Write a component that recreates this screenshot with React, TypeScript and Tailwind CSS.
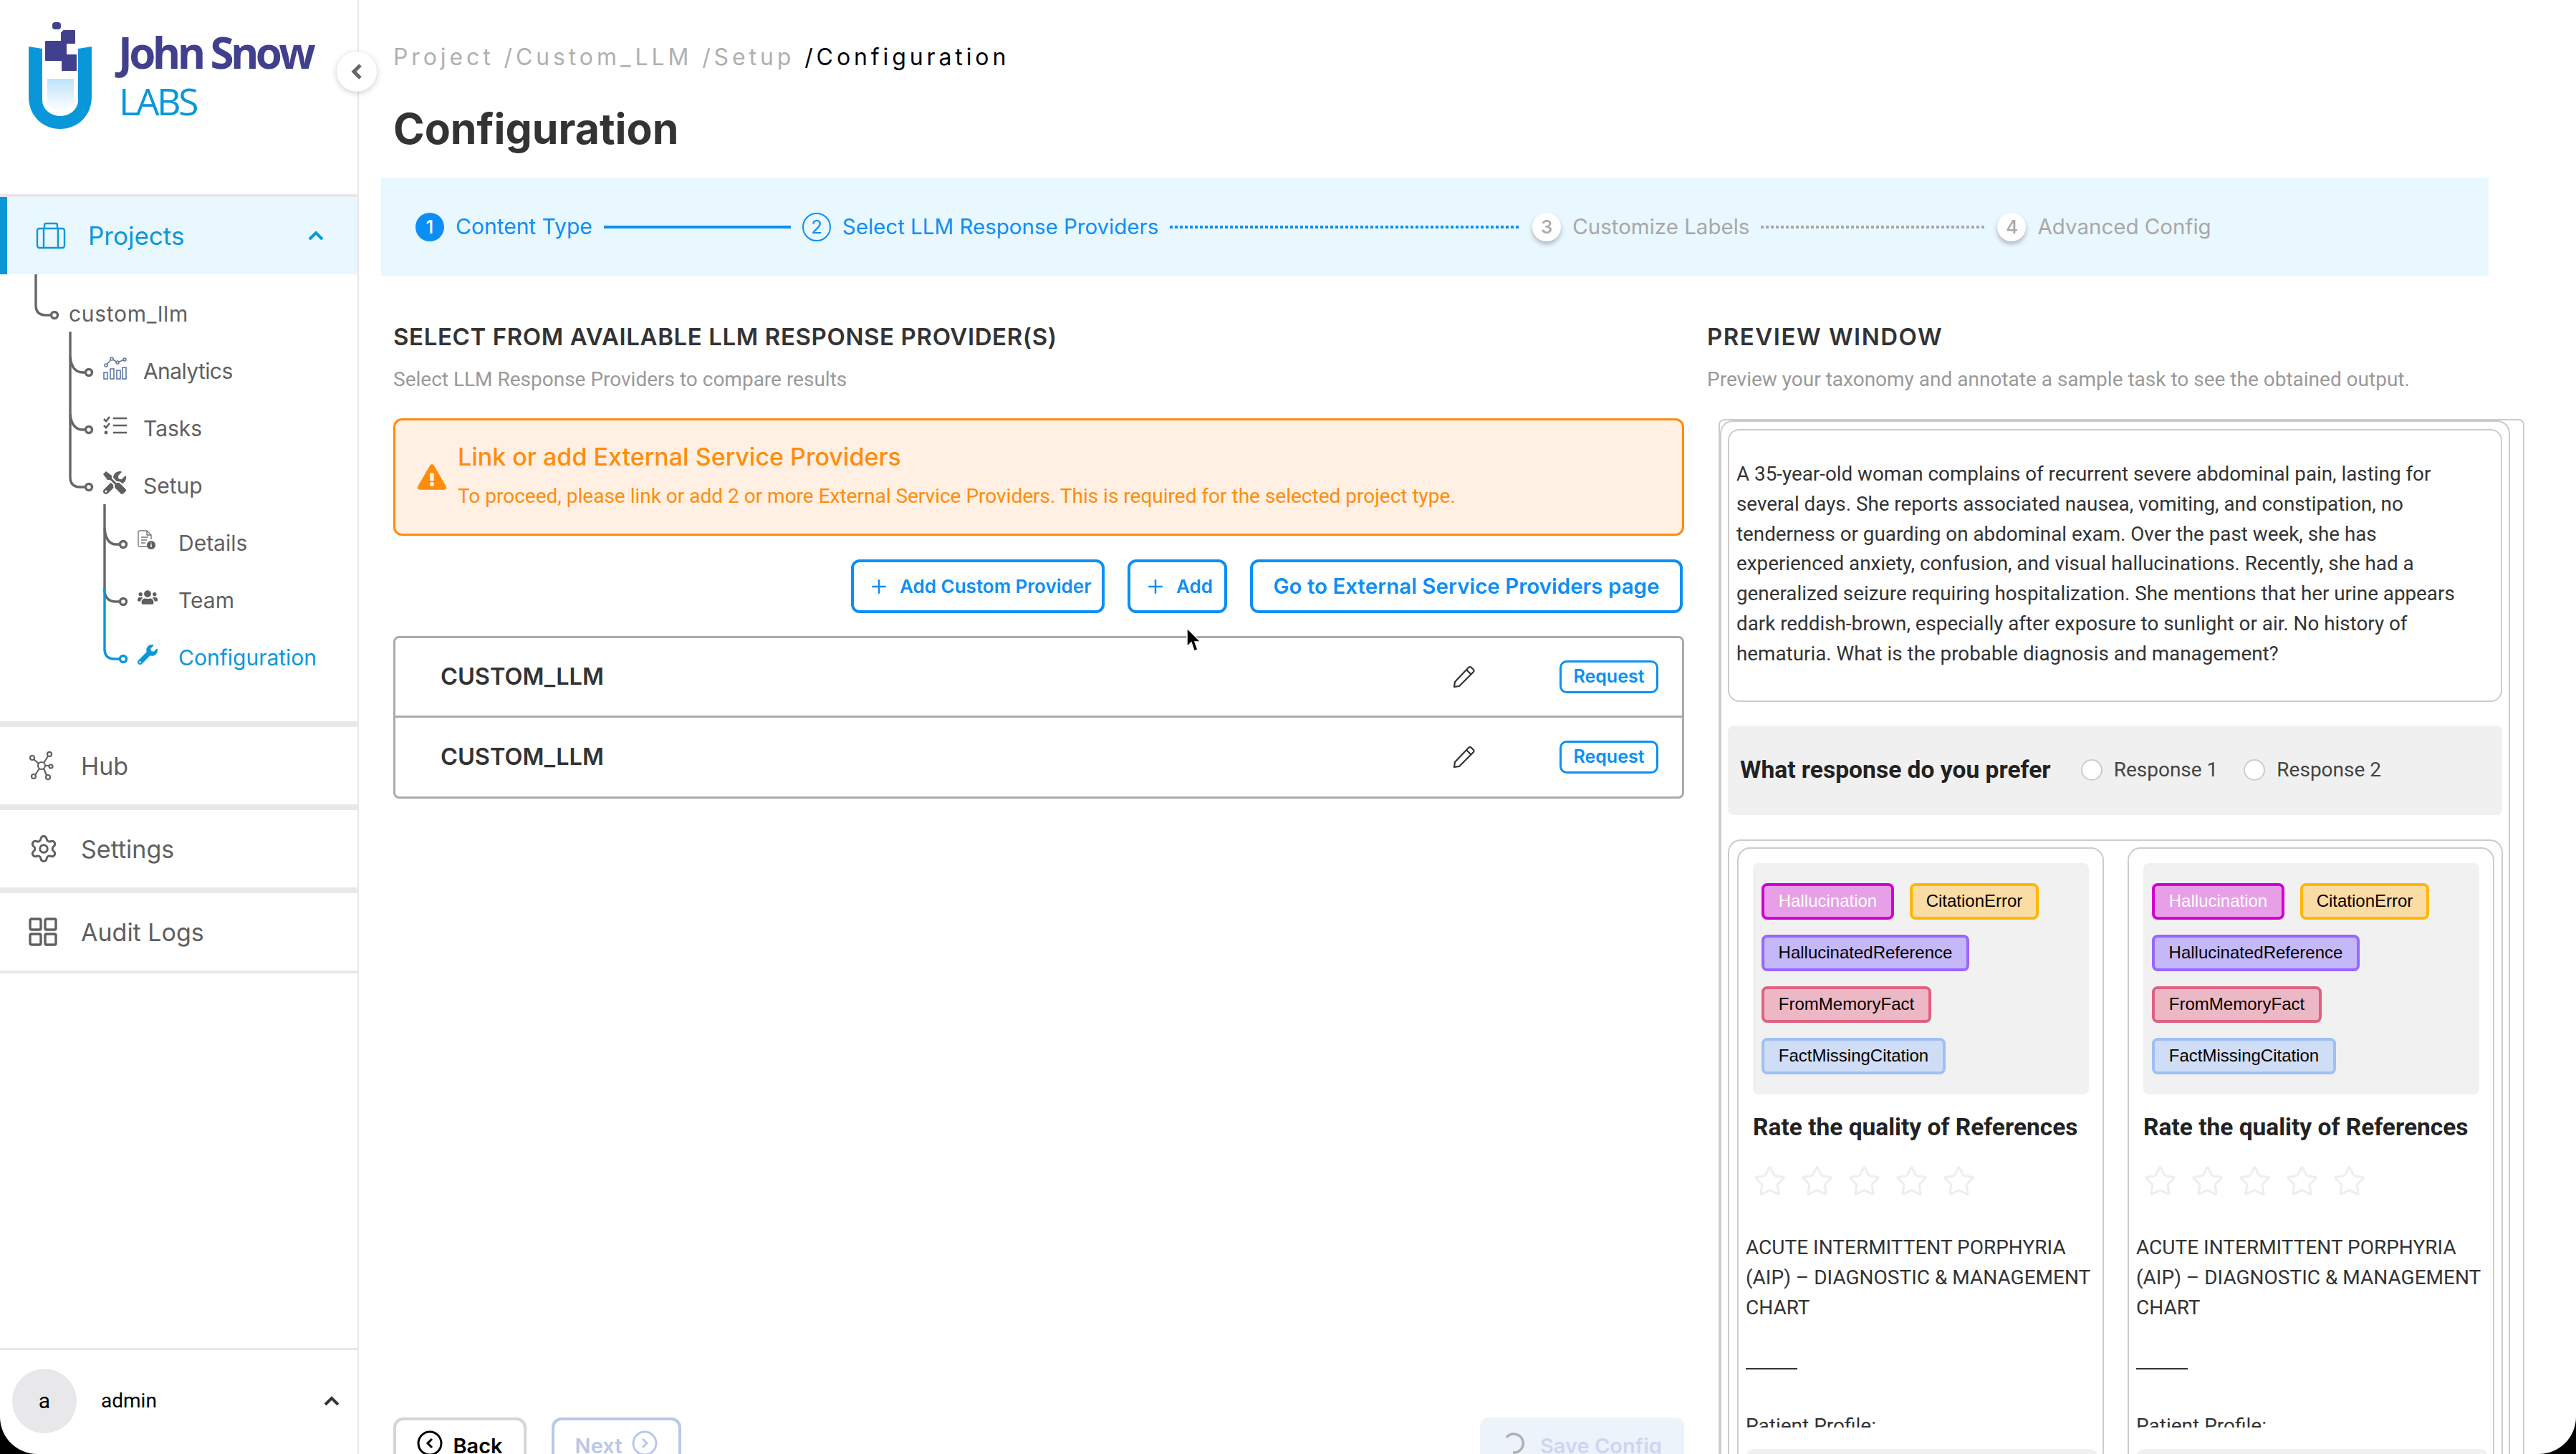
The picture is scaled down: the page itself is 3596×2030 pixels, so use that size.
import { Plus, Settings, Star } from "lucide-react";
import { FaExclamationTriangle, FaTools, FaUsers, FaWrench } from "react-icons/fa";

const Logo = () => (
  <svg width="100" height="160" viewBox="0 0 100 160" className="shrink-0">
    <defs>
      <linearGradient id="liquid" x1="0" y1="0" x2="0" y2="1">
        <stop offset="0" stopColor="#bde3fa" />
        <stop offset="1" stopColor="#ffffff" />
      </linearGradient>
    </defs>
    {/* viewBox origin sits at 40,25 on the page */}
    <path d="M0 40 L19 43 V115 C19 128 32 137 44 137 C57 137 69 128 69 115 V43 L88 40 V110 C88 137 68 155 44 155 C20 155 0 137 0 110 Z" fill="#0a97da" />
    <path d="M26 85 H63 V115 C63 124 54 131 44 131 C34 131 26 124 26 115 Z" fill="url(#liquid)" />
    <rect x="33" y="6" width="12" height="10" rx="4" fill="#41408f" />
    <path d="M49 18 H64 V35 H52 V52 H66 V73 H47 V59 H24 V33 H46 V21 Z" fill="#41408f" strokeLinejoin="round" stroke="#41408f" strokeWidth="2" />
  </svg>
);

const Chevron = ({ up, className }: { up?: boolean; className?: string }) => (
  <svg width="24" height="16" viewBox="0 0 24 16" className={className}>
    <path d={up ? "M3 13 L12 4 L21 13" : "M3 3 L12 12 L21 3"} fill="none" stroke="currentColor" strokeWidth="4" />
  </svg>
);

const Briefcase = () => (
  <svg width="42" height="38" viewBox="0 0 42 38" fill="none" stroke="#0a97da" strokeWidth="2.4">
    <rect x="2" y="9" width="38" height="27" rx="3" />
    <path d="M11 36 V9 M31 36 V9 M12 9 V4 Q12 2 14 2 H28 Q30 2 30 4 V9" />
  </svg>
);

const AnalyticsIcon = () => (
  <svg width="34" height="32" viewBox="0 0 34 32" fill="none" stroke="#5b78a8" strokeWidth="1.6">
    <path d="M4 12 L12 3 L20 8 L30 4" stroke="#777" />
    <circle cx="4" cy="12" r="2" fill="#fff" />
    <circle cx="12" cy="3" r="2" fill="#fff" />
    <circle cx="20" cy="8" r="2" fill="#fff" />
    <circle cx="30" cy="4" r="2" fill="#fff" />
    <rect x="1" y="22" width="5" height="9" />
    <rect x="10" y="17" width="5" height="14" />
    <rect x="19" y="19" width="5" height="12" />
    <rect x="27" y="15" width="5" height="16" />
  </svg>
);

const TasksIcon = () => (
  <svg width="34" height="28" viewBox="0 0 34 28" fill="none" stroke="#5f5f5f" strokeWidth="2.6">
    <path d="M1 5 L4 8 L9 2 M1 14 L4 17 L9 11 M14 4 H33 M14 14 H33 M14 24 H33" />
    <circle cx="4" cy="24" r="2.4" fill="#5f5f5f" stroke="none" />
  </svg>
);

const DetailsIcon = () => (
  <svg width="26" height="28" viewBox="0 0 26 28" fill="none" stroke="#777" strokeWidth="1.4">
    <path d="M14 23 H3 Q1 23 1 21 V3 Q1 1 3 1 H13 L19 7 V13 M13 1 V7 H19 M5 10 H15 M5 14 H13 M5 18 H11" />
    <circle cx="19" cy="21" r="6" fill="#5f5f5f" stroke="none" />
    <path d="M19 20 V24 M19 17.5 V18.5" stroke="#fff" strokeWidth="1.6" />
  </svg>
);

const HubIcon = () => (
  <svg width="36" height="40" viewBox="0 0 36 40" fill="none" stroke="#5f5f5f" strokeWidth="2.2">
    <circle cx="18" cy="20" r="5" />
    <circle cx="5" cy="9" r="3" />
    <circle cx="29" cy="4" r="3" />
    <circle cx="31" cy="21" r="2.5" />
    <circle cx="7" cy="35" r="3" />
    <circle cx="27" cy="36" r="3" />
    <path d="M7 11 L14 17 M27 7 L21 16 M22 20 H28 M9 33 L15 24 M25 33 L21 24" />
  </svg>
);

const GridIcon = () => (
  <svg width="40" height="40" viewBox="0 0 40 40" fill="none" stroke="#5f5f5f" strokeWidth="3.4">
    <rect x="2" y="2" width="15" height="15" rx="2" />
    <rect x="23" y="2" width="15" height="15" rx="2" />
    <rect x="2" y="23" width="15" height="15" rx="2" />
    <rect x="23" y="23" width="15" height="15" rx="2" />
  </svg>
);

const PencilIcon = () => (
  <svg width="34" height="34" viewBox="0 0 34 34" fill="none" stroke="#333" strokeWidth="2.2" strokeLinejoin="round">
    <path d="M3 31 L4 24 L23 4 Q25 2 27 4 L30 7 Q31 9 30 10 L10 30 Z M20 7 L27 14" />
  </svg>
);

// connector lines for the project tree, y is relative to the bottom of the Projects row
const TreeLines = () => (
  <svg width="200" height="560" className="absolute left-0 top-0" fill="none" stroke="#666" strokeWidth="3.4">
    <path d="M50 0 V43 Q50 57 64 57 H72" />
    <path d="M98 80 V283 Q98 297 112 297 H120" />
    <path d="M98 115 Q100 137 116 137 H120" />
    <path d="M98 195 Q100 217 116 217 H120" />
    <path d="M146 321 V443 Q148 457 162 457 H168" />
    <path d="M146 355 Q148 377 162 377 H168" />
    <path d="M146 437 V523 Q146 537 160 537 H168" stroke="#0a97da" />
    <circle cx="76" cy="57" r="4.5" fill="#fff" />
    <circle cx="124" cy="137" r="4.5" fill="#fff" />
    <circle cx="124" cy="217" r="4.5" fill="#fff" />
    <circle cx="124" cy="297" r="4.5" fill="#fff" />
    <circle cx="172" cy="377" r="4.5" fill="#fff" />
    <circle cx="172" cy="457" r="4.5" fill="#fff" />
    <circle cx="172" cy="537" r="4.5" fill="#fff" stroke="#0a97da" />
  </svg>
);

const TreeRow = ({ icon, label, level, active, className }: { icon?: React.ReactNode; label: string; level: number; active?: boolean; className?: string }) => (
  <div className={`flex h-[80px] items-center text-[30px] ${active ? "text-[#0a97da]" : "text-[#5f5f5f]"} ${level === 0 ? "pl-[96px]" : level === 1 ? "pl-[144px]" : "pl-[192px]"}`}>
    {icon && <span className={`flex h-10 -translate-y-1 items-center ${level === 1 ? "w-[56px]" : "w-[57px]"}`}>{icon}</span>}
    <span className={className}>{label}</span>
  </div>
);

const NavRow = ({ icon, label }: { icon: React.ReactNode; label: string }) => (
  <div className="box-content flex h-[108px] items-center border-t-8 border-[#e8e8ea] pl-[40px] text-[34px] text-[#5f5f5f]">
    <span className="flex w-[73px] items-center">{icon}</span>
    {label}
  </div>
);

const StepCircle = ({ n, state }: { n: number; state: "done" | "current" | "todo" }) => (
  <span
    className={`flex h-10 w-10 shrink-0 items-center justify-center rounded-full text-[26px] ${
      state === "done"
        ? "bg-[#0b8ff5] font-medium text-white"
        : state === "current"
          ? "border-2 border-[#0b8ff5] text-[#0b8ff5]"
          : "bg-white font-medium text-[#a8a8a8] shadow-[0_4px_6px_rgba(0,0,0,0.25)]"
    }`}
  >
    {n}
  </span>
);

const Stepper = () => (
  <div className="-ml-[17px] flex h-[137px] w-[2942px] items-center bg-[#e9f7fe] pl-[48px] text-[30px]">
    <StepCircle n={1} state="done" />
    <span className="ml-4 text-[#0b8ff5]">Content Type</span>
    <span className="ml-4 h-1 w-[261px] bg-[#0b8ff5]" />
    <span className="w-4" />
    <StepCircle n={2} state="current" />
    <span className="ml-4 text-[29.5px] text-[#0b8ff5]">Select LLM Response Providers</span>
    <span className="ml-4 h-1 w-[490px] bg-[repeating-linear-gradient(90deg,#0b8ff5_0_4px,transparent_4px_7px)]" />
    <span className="w-4" />
    <StepCircle n={3} state="todo" />
    <span className="ml-4 text-[29.5px] text-[#a8a8a8]">Customize Labels</span>
    <span className="ml-4 h-1 w-[314px] bg-[repeating-linear-gradient(90deg,#a8a8a8_0_4px,transparent_4px_7px)]" />
    <span className="w-4" />
    <StepCircle n={4} state="todo" />
    <span className="ml-4 text-[29.5px] text-[#a8a8a8]">Advanced Config</span>
  </div>
);

const OutlineButton = ({ children, className }: { children: React.ReactNode; className?: string }) => (
  <button className={`flex h-[75px] items-center rounded-[12px] border-4 border-[#0b8ff5] font-semibold text-[#0b8ff5] ${className ?? ""}`}>
    {children}
  </button>
);

const ProviderRow = ({ last }: { last?: boolean }) => (
  <div className={`flex items-center pl-[63px] pr-[33px] ${last ? "h-[110px]" : "h-[111px] border-b-[3px] border-[#aaaaaa]"}`}>
    <span className="flex-1 text-[32.5px] font-semibold text-[#333]">CUSTOM_LLM</span>
    <PencilIcon />
    <button className="ml-[116px] h-[46px] w-[138px] rounded-[10px] border-[3px] border-[#0b8ff5] text-[25px] font-semibold text-[#0b8ff5]">Request</button>
  </div>
);

const labels = [
  { text: "Hallucination", cls: "w-[185px] border-[#d000d0] bg-[#e7a0e7] text-white" },
  { text: "CitationError", cls: "w-[180px] border-[#ffb800] bg-[#fbdca5] text-black" },
  { text: "HallucinatedReference", cls: "w-[290px] border-[#9966ff] bg-[#c4b8f8] text-black" },
  { text: "FromMemoryFact", cls: "w-[237px] border-[#e06080] bg-[#ecb8c5] text-black" },
  { text: "FactMissingCitation", cls: "w-[257px] border-[#a0c0f5] bg-[#cfddf7] text-black" },
];

const ResponseCard = () => (
  <div className="h-[900px] w-[512px] rounded-[18px] border-2 border-[#cccccc] pt-[20px]">
    <div className="ml-[20px] flex h-[323px] w-[469px] flex-wrap content-start gap-x-[22px] gap-y-[21px] rounded-[8px] bg-[#f1f1f1] pl-[12px] pt-[28px] font-['Liberation_Sans',sans-serif]">
      {labels.map((l) => (
        <span key={l.text} className={`flex h-[51px] items-center justify-center rounded-[8px] border-4 text-[24px] ${l.cls}`}>
          {l.text}
        </span>
      ))}
    </div>
    <h3 className="ml-[20px] mt-[24px] text-[33.5px] font-bold leading-[44px] text-[#222]">Rate the quality of References</h3>
    <div className="ml-[20px] mt-[30px] flex gap-[19px] text-[#eeeeee]">
      {[0, 1, 2, 3, 4].map((i) => (
        <Star key={i} size={47} strokeWidth={1.6} />
      ))}
    </div>
    <div className="ml-[10px] mt-[48px] h-[272px] overflow-hidden text-[28px] leading-[42px] text-[#333]">
      <p>ACUTE INTERMITTENT PORPHYRIA (AIP) – DIAGNOSTIC &amp; MANAGEMENT CHART</p>
      <div className="mt-[63px] h-[2px] w-[72px] bg-[#333]" />
      <p className="mt-[58px]">Patient Profile:</p>
    </div>
    <div className="ml-[11px] mt-[30px] h-10 w-[490px] rounded-t-[10px] bg-[#f1f1f1]" />
  </div>
);

const Radio = () => <span className="h-[30px] w-[30px] shrink-0 rounded-full border-2 border-[#cccccc] bg-white" />;

const Preview = () => (
  <div className="relative ml-[16px] mt-[35px] h-[1500px] w-[1125px] rounded-t-[8px] border-2 border-b-0 border-[#cccccc] pr-[18px]">
    <div className="h-full rounded-t-[18px] border-2 border-b-0 border-[#cccccc] pl-[9px] pt-[10px]">
      <div className="w-[1081px] rounded-[16px] border-2 border-[#cccccc] pb-[44px] pl-[10px] pt-[40px] pr-[40px] text-[27.8px] leading-[41.8px] text-[#333]">
        A 35-year-old woman complains of recurrent severe abdominal pain, lasting for several days. She reports associated nausea, vomiting, and constipation, no tenderness or guarding on abdominal exam. Over the past week, she has experienced anxiety, confusion, and visual hallucinations. Recently, she had a generalized seizure requiring hospitalization. She mentions that her urine appears dark reddish-brown, especially after exposure to sunlight or air. No history of hematuria. What is the probable diagnosis and management?
      </div>
      <div className="mt-[33px] flex h-[125px] w-[1081px] items-center rounded-[8px] bg-[#f0f0f0] pl-[17px] text-[28px] text-[#444]">
        <span className="mr-[42px] text-[33.6px] font-bold text-[#222]">What response do you prefer</span>
        <Radio />
        <span className="ml-4 mr-[36px]">Response 1</span>
        <Radio />
        <span className="ml-4">Response 2</span>
      </div>
      <div className="mt-[34px] flex h-[900px] w-[1082px] gap-[33px] rounded-t-[18px] border-2 border-b-0 border-[#cccccc] pl-[11px] pt-[9px]">
        <ResponseCard />
        <ResponseCard />
      </div>
    </div>
  </div>
);

export default function App() {
  return (
    <div className="h-[2030px] w-[3596px] overflow-hidden bg-black font-['Inter',sans-serif]">
      <div className="relative flex h-full w-full overflow-hidden rounded-b-[52px] bg-white">
        {/* sidebar */}
        <aside className="flex h-full w-[501px] shrink-0 flex-col border-r-2 border-[#e8e8e8]">
          <div className="flex h-[271px] items-start pl-[40px] pt-[25px]">
            <Logo />
            <div className="ml-[25px] flex flex-col pt-[10px] font-['Open_Sans',sans-serif]">
              <span className="text-[60px] font-bold leading-[76px] tracking-[-4.6px] text-[#41408f]">John Snow</span>
              <span className="ml-[1px] text-[52px] leading-[60px] tracking-[-3.5px] text-[#0a97da]">LABS</span>
            </div>
          </div>
          <div className="h-1 bg-[#e8e8ea]" />
          <div className="flex h-[108px] items-center border-l-[10px] border-[#0a97da] bg-[#e9f7fe] pl-[40px] pr-[46px] text-[35px] text-[#0a97da]">
            <Briefcase />
            <span className="ml-[31px] flex-1">Projects</span>
            <Chevron up />
          </div>
          <div className="relative h-[624px] pt-[15px]">
            <TreeLines />
            <TreeRow label="custom_llm" level={0} className="tracking-[0.7px]" />
            <TreeRow label="Analytics" level={1} icon={<AnalyticsIcon />} className="tracking-[-0.6px]" />
            <TreeRow label="Tasks" level={1} icon={<TasksIcon />} />
            <TreeRow label="Setup" level={1} icon={<FaTools size={32} color="#5f5f5f" />} />
            <TreeRow label="Details" level={2} icon={<DetailsIcon />} />
            <TreeRow label="Team" level={2} icon={<FaUsers size={28} color="#5f5f5f" />} />
            <TreeRow label="Configuration" level={2} active icon={<FaWrench size={28} color="#0a97da" />} />
          </div>
          <NavRow icon={<HubIcon />} label="Hub" />
          <NavRow icon={<Settings size={42} strokeWidth={1.7} />} label="Settings" />
          <NavRow icon={<GridIcon />} label="Audit Logs" />
          <div className="h-1 bg-[#e8e8ea]" />
          <div className="mt-auto h-[3px] bg-[#e8e8ea]" />
          <div className="flex h-[145px] items-center pb-[4px] pl-[17px] pr-[24px] font-['Roboto',sans-serif] text-[28px] text-black">
            <span className="flex h-[90px] w-[90px] items-center justify-center rounded-full bg-[#e8e8ea] text-[30px]">a</span>
            <span className="ml-[34px] flex-1">admin</span>
            <Chevron up className="text-[#333]" />
          </div>
        </aside>

        <button className="absolute left-[470px] top-[72px] flex h-[56px] w-[56px] items-center justify-center rounded-full bg-white text-[#666] shadow-[0_2px_8px_rgba(0,0,0,0.2)]">
          <svg width="16" height="24" viewBox="0 0 16 24" fill="none" stroke="currentColor" strokeWidth="5">
            <path d="M13 3 L4 12 L13 21" />
          </svg>
        </button>

        {/* main */}
        <main className="flex-1 pl-[48px] pt-[60px]">
          <div className="text-[32px] leading-[40px] tracking-[4.9px] text-[#b0b0b0]">
            Project /Custom_LLM /Setup <span className="text-black">/Configuration</span>
          </div>
          <h1 className="mt-[47px] text-[59px] font-bold leading-[66px] text-[#333]">Configuration</h1>
          <div className="mt-[35px]">
            <Stepper />
          </div>
          <div className="mt-[65px] flex">
            {/* providers */}
            <section className="flex h-[1609px] w-[1802px] shrink-0 flex-col">
              <h2 className="text-[33px] font-semibold leading-[40px] tracking-[0.6px] text-[#333]">SELECT FROM AVAILABLE LLM RESPONSE PROVIDER(S)</h2>
              <p className="mt-[20px] font-['Roboto',sans-serif] text-[28px] leading-[40px] text-[#9a9a9a]">Select LLM Response Providers to compare results</p>
              <div className="mt-[34px] flex h-[164px] items-center rounded-[12px] border-[3px] border-[#ff8c0a] bg-[#fff0e3] pl-[31px] text-[#ff8c0a]">
                <FaExclamationTriangle size={40} className="shrink-0" />
                <div className="ml-[16px] -translate-y-[2px]">
                  <div className="text-[34px] font-medium leading-[44px]">Link or add External Service Providers</div>
                  <div className="mt-[13px] font-['Roboto',sans-serif] text-[28px] leading-[40px]">To proceed, please link or add 2 or more External Service Providers. This is required for the selected project type.</div>
                </div>
              </div>
              <div className="mt-[33px] flex justify-end gap-[32px] pr-[2px] text-[26px]">
                <OutlineButton className="w-[354px] pl-[20px]">
                  <Plus size={30} strokeWidth={2} />
                  <span className="ml-[14px]">Add Custom Provider</span>
                </OutlineButton>
                <OutlineButton className="w-[139px] pl-[20px]">
                  <Plus size={30} strokeWidth={2} />
                  <span className="ml-[14px]">Add</span>
                </OutlineButton>
                <OutlineButton className="w-[604px] justify-center text-[29.5px]">Go to External Service Providers page</OutlineButton>
              </div>
              <div className="mt-[32px] rounded-[8px] border-[3px] border-[#aaaaaa]">
                <ProviderRow />
                <ProviderRow last />
              </div>
              <div className="mt-auto flex items-start text-[29px] font-semibold">
                <button className="flex h-[80px] w-[186px] items-start justify-center gap-[14px] rounded-[14px] border-4 border-[#d5d5d5] pt-[14px] text-black">
                  <svg width="36" height="36" viewBox="0 0 36 36" fill="none" stroke="currentColor" strokeWidth="3" className="shrink-0">
                    <circle cx="18" cy="18" r="16" />
                    <path d="M21 12 L15 18 L21 24" />
                  </svg>
                  Back
                </button>
                <button className="ml-[35px] flex h-[80px] w-[181px] items-start justify-center gap-[14px] rounded-[14px] border-4 border-[#b8c8e8] pt-[14px] text-[#b8c8e8]">
                  Next
                  <svg width="36" height="36" viewBox="0 0 36 36" fill="none" stroke="currentColor" strokeWidth="3" className="shrink-0">
                    <circle cx="18" cy="18" r="16" />
                    <path d="M15 12 L21 18 L15 24" />
                  </svg>
                </button>
                <button className="ml-auto flex h-[80px] w-[285px] items-start gap-[20px] rounded-[12px] bg-[#edf3fb] pl-[34px] pt-[18px] text-[#cdd6f0]">
                  <svg width="30" height="36" viewBox="0 0 30 36" fill="none" stroke="#b0b0b0" strokeWidth="3.5" className="shrink-0">
                    <path d="M3 10 A13 13 0 1 1 12 31" />
                  </svg>
                  Save Config
                </button>
              </div>
            </section>

            {/* preview */}
            <section className="ml-[32px] w-[1142px] shrink-0">
              <h2 className="text-[33px] font-semibold leading-[40px] tracking-[1.5px] text-[#333]">PREVIEW WINDOW</h2>
              <p className="mt-[20px] font-['Roboto',sans-serif] text-[28px] leading-[40px] text-[#9a9a9a]">Preview your taxonomy and annotate a sample task to see the obtained output.</p>
              <div className="font-['Roboto',sans-serif]">
                <Preview />
              </div>
            </section>
          </div>
        </main>

        {/* mouse pointer */}
        <svg width="24" height="36" viewBox="0 0 24 36" className="absolute left-[1655px] top-[876px]">
          <path d="M2 1 V27 L8 21 L12 33 L17 31 L13 20 L21 20 Z" fill="#000" stroke="#fff" strokeWidth="1.5" />
        </svg>
      </div>
    </div>
  );
}
